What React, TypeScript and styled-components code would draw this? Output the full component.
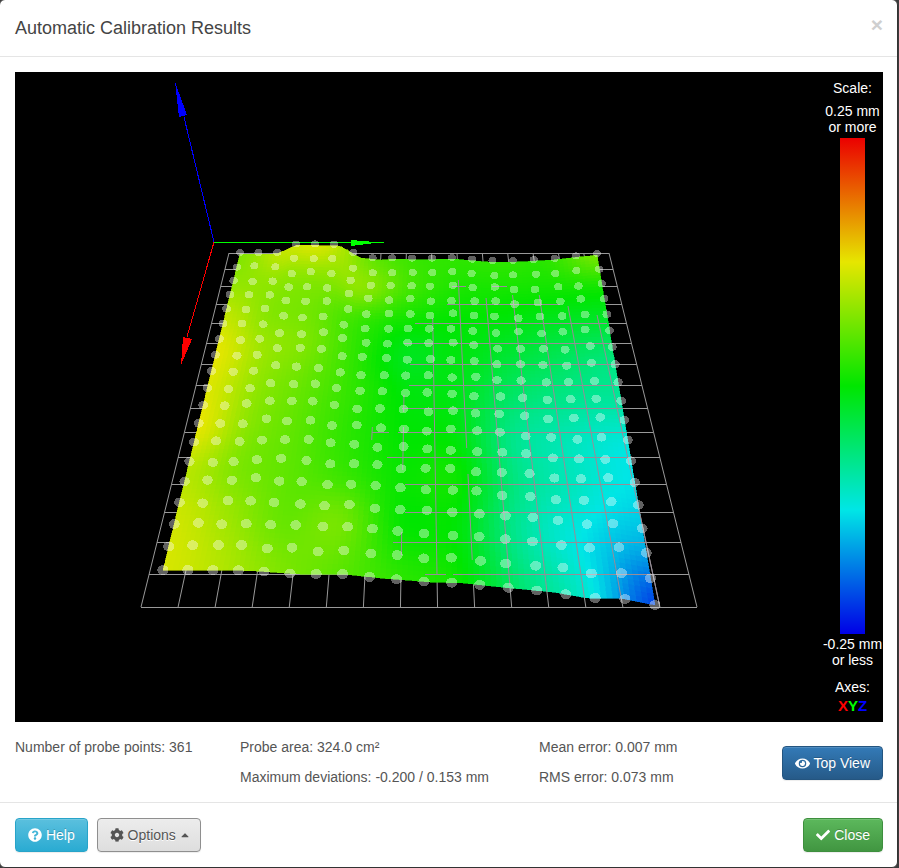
import React from "react";
import styled, { createGlobalStyle } from "styled-components";
import { FaQuestionCircle, FaCog, FaCaretUp, FaEye, FaCheck } from "react-icons/fa";

const Global = createGlobalStyle`
  html, body { margin: 0; padding: 0; height: 100%; overflow: hidden; background: #3c3c3c; }
  body { font-family: "Liberation Sans", Arial, sans-serif; font-size: 14px; line-height: 20px; color: #555; }
  * { box-sizing: border-box; }
`;

const Modal = styled.div`
  width: 899px;
  height: 869px;
  margin: -1px 0 0 -1px;
  background: #fff;
  border: 1px solid #333;
  border-radius: 6px;
  display: flex;
  flex-direction: column;
  overflow: hidden;
`;
const Header = styled.header`
  height: 57px;
  flex: none;
  padding: 15px 14px 15px 15px;
  display: flex;
  justify-content: space-between;
  align-items: center;
  border-bottom: 1px solid #e5e5e5;
`;
const Title = styled.h4`
  margin: 0;
  font-size: 18px;
  font-weight: 400;
  line-height: 26px;
  color: #444;
`;
const Dismiss = styled.span`
  font-size: 21px;
  font-weight: 700;
  line-height: 21px;
  color: #cfcfcf;
  margin-top: -7px;
`;
const Body = styled.main`
  flex: 1;
  padding: 15px 14px 0 15px;
  display: flex;
  flex-direction: column;
`;
const Plot = styled.div`
  position: relative;
  width: 868px;
  height: 650px;
  background: #000;
  flex: none;
`;
const PlotSvg = styled.svg`
  display: block;
  width: 868px;
  height: 650px;
`;
const Legend = styled.div`
  position: absolute;
  top: 0;
  right: 0;
  width: 61px;
  height: 650px;
  display: flex;
  flex-direction: column;
  align-items: center;
  color: #fff;
  font-size: 14px;
  line-height: 16px;
  white-space: nowrap;
  text-align: center;
`;
const LegendScale = styled.div`
  margin-top: 8px;
`;
const LegendTop = styled.div`
  margin-top: 7px;
`;
const Bar = styled.div`
  flex: none;
  width: 25px;
  height: 496px;
  margin: 3px 0 2px;
  background: linear-gradient(
    to bottom,
    rgb(235, 0, 0) 0%,
    rgb(230, 230, 0) 25%,
    rgb(0, 230, 0) 50%,
    rgb(0, 230, 230) 75%,
    rgb(0, 0, 230) 100%
  );
`;
const LegendAxes = styled.div`
  margin-top: 11px;
`;
const AxesKey = styled.div`
  margin-top: 3px;
  font-size: 15px;
  font-weight: 700;
`;
const AxisLetter = styled.span<{ $c: string }>`
  color: ${(p) => p.$c};
`;
const Info = styled.section`
  display: grid;
  grid-template-columns: 225px 299px 1fr auto;
  padding-top: 15px;
  height: 80px;
`;
const InfoCol = styled.div`
  display: flex;
  flex-direction: column;
  gap: 10px;
`;
const Line = styled.div`
  height: 20px;
`;
const Footer = styled.footer`
  flex: 1;
  border-top: 1px solid #e5e5e5;
  padding: 15px 14px 15px 15px;
  display: flex;
  align-items: flex-start;
  gap: 9px;
`;
const Btn = styled.button<{ $from: string; $to: string; $border: string; $fg?: string }>`
  height: 34px;
  padding: 6px 12px;
  font: 14px/20px "Liberation Sans", Arial, sans-serif;
  color: ${(p) => p.$fg || "#fff"};
  text-shadow: ${(p) => (p.$fg ? "0 1px 0 #fff" : "0 -1px 0 rgba(0,0,0,.2)")};
  background: linear-gradient(to bottom, ${(p) => p.$from} 0%, ${(p) => p.$to} 100%);
  border: 1px solid ${(p) => p.$border};
  border-radius: 4px;
  box-shadow: inset 0 1px 0 rgba(255, 255, 255, 0.15), 0 1px 1px rgba(0, 0, 0, 0.075);
  display: inline-flex;
  align-items: center;
  white-space: pre;
  svg { flex: none; }
`;
const TopBtn = styled(Btn)`
  margin-top: 9px;
`;
const Caret = styled(FaCaretUp)`
  margin: 0 -3px 0 -1px;
`;
const Spacer = styled.div`
  flex: 1;
`;

/* ---------- 3D plot data ---------- */
type P = [number, number];
const lerp = (a: number, b: number, t: number) => a + (b - a) * t;

function homography(p00: P, p10: P, p11: P, p01: P) {
  const dx1 = p10[0] - p11[0], dx2 = p01[0] - p11[0], sx = p00[0] - p10[0] + p11[0] - p01[0];
  const dy1 = p10[1] - p11[1], dy2 = p01[1] - p11[1], sy = p00[1] - p10[1] + p11[1] - p01[1];
  const d = dx1 * dy2 - dx2 * dy1;
  const g = (sx * dy2 - dx2 * sy) / d, h = (dx1 * sy - sx * dy1) / d;
  const a = p10[0] - p00[0] + g * p10[0], b = p01[0] - p00[0] + h * p01[0], c = p00[0];
  const e = p10[1] - p00[1] + g * p10[1], f = p01[1] - p00[1] + h * p01[1], i = p00[1];
  return (u: number, v: number): P => {
    const w = g * u + h * v + 1;
    return [(a * u + b * v + c) / w, (e * u + f * v + i) / w];
  };
}
const H = homography([240, 254], [597, 255], [655, 605], [163, 570]);

const topEdge: P[] = [[240, 254], [277, 254], [288, 249], [297, 245], [340, 246], [350, 252], [360, 258], [380, 260], [397, 259], [420, 260], [453, 259], [487, 262], [520, 262], [553, 260], [597, 255]];
const bottomEdge: P[] = [[163, 570], [230, 570], [257, 571], [297, 574], [343, 574], [380, 578], [430, 582], [463, 583], [500, 587], [553, 592], [587, 598], [620, 598], [655, 605]];
const edgeY = (edge: P[], x: number) => {
  for (let i = 1; i < edge.length; i++) {
    if (x <= edge[i][0]) {
      const [x0, y0] = edge[i - 1], [x1, y1] = edge[i];
      return lerp(y0, y1, Math.max(0, (x - x0) / (x1 - x0)));
    }
  }
  return edge[edge.length - 1][1];
};
const surf = (u: number, v: number): P => {
  const [x, y] = H(u, v);
  const t = H(u, 0), b = H(u, 1);
  const dt = edgeY(topEdge, t[0]) - t[1];
  const db = edgeY(bottomEdge, b[0]) - b[1];
  return [x, y + (1 - v) * dt + v * db];
};

const Z = [
  [0.28, 0.42, 0.46, 0.24, 0.13, 0.10, 0.10, 0.10, 0.26],
  [0.32, 0.31, 0.30, 0.30, 0.14, 0.06, 0.04, 0.03, 0.04],
  [0.42, 0.29, 0.24, 0.12, 0.03, 0.00, -0.03, -0.08, -0.10],
  [0.50, 0.34, 0.26, 0.09, -0.06, -0.03, -0.12, -0.20, -0.27],
  [0.48, 0.32, 0.22, 0.10, -0.02, -0.05, -0.22, -0.30, -0.34],
  [0.50, 0.30, 0.20, 0.09, 0.00, -0.03, -0.30, -0.40, -0.48],
  [0.40, 0.27, 0.20, 0.12, 0.02, 0.02, -0.28, -0.42, -0.52],
  [0.45, 0.34, 0.22, 0.25, 0.02, -0.02, -0.32, -0.50, -0.62],
  [0.47, 0.39, 0.28, 0.20, 0.10, 0.02, -0.25, -0.46, -0.85],
];
const cr = (a: number, b: number, c: number, d: number, t: number) =>
  0.5 * (2 * b + (c - a) * t + (2 * a - 5 * b + 4 * c - d) * t * t + (3 * b - a - 3 * c + d) * t * t * t);
const zAt = (u: number, v: number) => {
  const n = Z.length - 1;
  const fx = Math.min(u * n, n - 1e-6), fy = Math.min(v * n, n - 1e-6);
  const ix = Math.floor(fx), iy = Math.floor(fy);
  const tx = fx - ix, ty = fy - iy;
  const at = (r: number, c: number) => Z[Math.max(0, Math.min(n, r))][Math.max(0, Math.min(n, c))];
  const row = (r: number) => cr(at(r, ix - 1), at(r, ix), at(r, ix + 1), at(r, ix + 2), tx);
  return cr(row(iy - 1), row(iy), row(iy + 1), row(iy + 2), ty);
};
const stops: [number, number[]][] = [
  [1, [235, 0, 0]], [0.5, [230, 230, 0]], [0, [0, 230, 0]], [-0.5, [0, 230, 230]], [-1, [0, 0, 230]],
];
const colour = (z: number) => {
  for (let i = 1; i < stops.length; i++) {
    if (z >= stops[i][0]) {
      const t = (z - stops[i][0]) / (stops[i - 1][0] - stops[i][0]);
      const c = stops[i][1].map((a, k) => Math.round(lerp(a, stops[i - 1][1][k], t)));
      return `rgb(${c[0]},${c[1]},${c[2]})`;
    }
  }
  return "rgb(0,0,230)";
};

const MESH = 90;
const cells: { pts: string; fill: string }[] = [];
for (let j = 0; j < MESH; j++) {
  for (let i = 0; i < MESH; i++) {
    const u0 = i / MESH, u1 = (i + 1) / MESH, v0 = j / MESH, v1 = (j + 1) / MESH;
    const c = [surf(u0, v0), surf(u1, v0), surf(u1, v1), surf(u0, v1)];
    cells.push({
      pts: c.map((p) => `${p[0].toFixed(1)},${p[1].toFixed(1)}`).join(" "),
      fill: colour(zAt((u0 + u1) / 2, (v0 + v1) / 2)),
    });
  }
}

const noise = (a: number, b: number) => {
  const s = Math.sin(a * 127.1 + b * 311.7) * 43758.5453;
  return s - Math.floor(s) - 0.5;
};
const dots: { x: number; y: number; rx: number; ry: number }[] = [];
for (let j = 0; j < 19; j++) {
  for (let i = 0; i < 19; i++) {
    const u = i / 18, v = j / 18;
    const edge = i === 0 || i === 18 || j === 0 || j === 18;
    const [x, y] = surf(u, v);
    dots.push({
      x: x + (edge ? 0 : noise(i, j) * 3),
      y: y + (edge ? (j === 0 ? -1.5 : 0) : noise(j, i) * 3),
      rx: 4 + 1.6 * v,
      ry: 3.5 + 1.5 * v,
    });
  }
}

const rows = [253, 269, 286, 304, 323, 343, 364, 385, 408, 432, 457, 484, 512, 542, 574, 607];
const leftAt = (y: number) => lerp(229, 141, (y - 253) / 354);
const rightAt = (y: number) => lerp(609, 697, (y - 253) / 354);
const colX = (c: number, y: number) => {
  const t = (y - 253) / 354;
  return lerp(229 + (380 / 15) * c, 141 + (556 / 15) * c, t);
};

// parts of the floor grid that show through where the surface lies below it
const hFrag: [number, number, number][] = [
  [286, 452, 466], [286, 492, 507], [304, 447, 560], [323, 415, 607], [343, 404, 611],
  [364, 410, 615], [385, 409, 620], [408, 402, 622], [432, 372, 389], [432, 398, 626],
  [457, 387, 630], [484, 405, 636], [512, 405, 641], [542, 393, 647], [574, 425, 446], [574, 453, 652],
];
const vFrag: [number, number, number][] = [
  [6, 427, 440], [7, 395, 412], [7, 427, 470], [7, 532, 555], [8, 318, 574],
  [9, 280, 448], [9, 474, 560], [10, 298, 586], [11, 295, 592], [12, 295, 598], [13, 306, 600], [14, 315, 604],
];

const PlotDrawing = React.memo(function PlotDrawing() {
  return (
    <PlotSvg viewBox="15 72 868 650">
      <g stroke="#999" strokeWidth="1" shapeRendering="crispEdges">
        {rows.map((y) => (
          <line key={y} x1={leftAt(y)} x2={rightAt(y)} y1={y} y2={y} />
        ))}
      </g>
      <g stroke="#999" strokeWidth="1">
        {Array.from({ length: 16 }, (_, c) => (
          <line key={c} x1={colX(c, 253)} y1={253} x2={colX(c, 607)} y2={607} />
        ))}
      </g>
      <g shapeRendering="crispEdges">
        <line x1="214" y1="242" x2="184" y2="117" stroke="#00f" />
        <polygon points="175,82 179,117 187,115" fill="#00f" />
        <line x1="214" y1="242" x2="187" y2="337" stroke="#f00" />
        <polygon points="181,365 183,337 192,339" fill="#f00" />
        <line x1="214" y1="242.5" x2="384" y2="242.5" stroke="#0f0" />
        <polygon points="351,240 351,246 375,243 375,242" fill="#0f0" />
      </g>
      <g shapeRendering="crispEdges">
        {cells.map((c, i) => (
          <polygon key={i} points={c.pts} fill={c.fill} stroke={c.fill} strokeWidth="0.6" />
        ))}
      </g>
      <g stroke="#988c98" strokeWidth="1" shapeRendering="crispEdges">
        {hFrag.map(([y, a, b], i) => (
          <line key={i} x1={a} x2={b} y1={y + 0.5} y2={y + 0.5} />
        ))}
      </g>
      <g stroke="#988c98" strokeWidth="1">
        {vFrag.map(([c, a, b], i) => (
          <line key={i} x1={colX(c, a)} x2={colX(c, b)} y1={a} y2={b} />
        ))}
      </g>
      <g fill="#fff" fillOpacity="0.38" shapeRendering="crispEdges">
        {dots.map((d, i) => (
          <ellipse key={i} cx={d.x} cy={d.y} rx={d.rx} ry={d.ry} />
        ))}
      </g>
    </PlotSvg>
  );
});

export default function App() {
  return (
    <>
      <Global />
      <Modal>
        <Header>
          <Title>Automatic Calibration Results</Title>
          <Dismiss>×</Dismiss>
        </Header>
        <Body>
          <Plot>
            <PlotDrawing />
            <Legend>
              <LegendScale>Scale:</LegendScale>
              <LegendTop>
                0.25 mm
                <br />
                or more
              </LegendTop>
              <Bar />
              <div>
                -0.25 mm
                <br />
                or less
              </div>
              <LegendAxes>Axes:</LegendAxes>
              <AxesKey>
                <AxisLetter $c="#f00">X</AxisLetter>
                <AxisLetter $c="#0f0">Y</AxisLetter>
                <AxisLetter $c="#00f">Z</AxisLetter>
              </AxesKey>
            </Legend>
          </Plot>
          <Info>
            <InfoCol>
              <Line>Number of probe points: 361</Line>
            </InfoCol>
            <InfoCol>
              <Line>Probe area: 324.0 cm²</Line>
              <Line>Maximum deviations: -0.200 / 0.153 mm</Line>
            </InfoCol>
            <InfoCol>
              <Line>Mean error: 0.007 mm</Line>
              <Line>RMS error: 0.073 mm</Line>
            </InfoCol>
            <div>
              <TopBtn $from="#337ab7" $to="#265a88" $border="#245580">
                <FaEye size={15} /> Top View
              </TopBtn>
            </div>
          </Info>
        </Body>
        <Footer>
          <Btn $from="#5bc0de" $to="#2aabd2" $border="#28a4c9">
            <FaQuestionCircle size={14} /> Help
          </Btn>
          <Btn $from="#ececec" $to="#dedede" $border="#8f8f8f" $fg="#555">
            <FaCog size={14} /> Options <Caret size={12} />
          </Btn>
          <Spacer />
          <Btn $from="#5cb85c" $to="#419641" $border="#3e8f3e">
            <FaCheck size={14} /> Close
          </Btn>
        </Footer>
      </Modal>
    </>
  );
}
